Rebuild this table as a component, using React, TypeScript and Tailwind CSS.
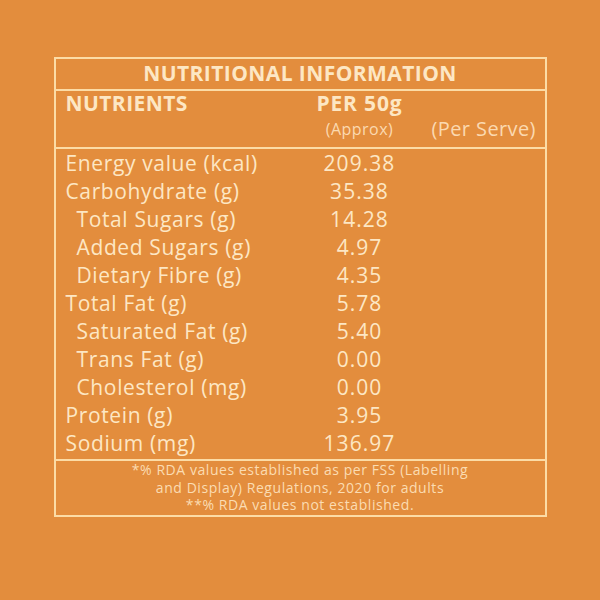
const rows: { name: string; value: string; indent?: boolean }[] = [
    { name: "Energy value (kcal)", value: "209.38" },
    { name: "Carbohydrate (g)", value: "35.38" },
    { name: "Total Sugars (g)", value: "14.28", indent: true },
    { name: "Added Sugars (g)", value: "4.97", indent: true },
    { name: "Dietary Fibre (g)", value: "4.35", indent: true },
    { name: "Total Fat (g)", value: "5.78" },
    { name: "Saturated Fat (g)", value: "5.40", indent: true },
    { name: "Trans Fat (g)", value: "0.00", indent: true },
    { name: "Cholesterol (mg)", value: "0.00", indent: true },
    { name: "Protein (g)", value: "3.95" },
    { name: "Sodium (mg)", value: "136.97" },
];

export default function App() {
    return (
        <div
            className="flex h-[600px] w-[600px] items-start justify-center bg-[#e38d3d] pt-[57px] text-[#fde7c4]"
            style={{ fontFamily: '"Open Sans", "Noto Sans", sans-serif' }}
        >
            <div className="w-[493px] border-2 border-[#fcdca6]">
                <div className="flex h-[32px] items-center justify-center border-b-2 border-[#fcdca6] text-[21px] font-bold tracking-[0.02em]">
                    NUTRITIONAL INFORMATION
                </div>

                <div className="grid h-[58px] grid-cols-[252px_104px_1fr] grid-rows-[24px_1fr] border-b-2 border-[#fcdca6]">
                    <div className="pl-[10px] text-[21px] font-bold leading-[24px] tracking-[0.02em]">
                        NUTRIENTS
                    </div>
                    <div className="whitespace-nowrap text-center text-[21px] font-bold leading-[24px] tracking-[0.04em]">
                        PER 50g
                    </div>
                    <div />
                    <div />
                    <div className="pt-[4px] text-center text-[16px] leading-[20px] tracking-[0.03em] text-[#fbd9b0]">
                        (Approx)
                    </div>
                    <div className="pl-[20px] pt-[3px] text-[20px] leading-[22px] tracking-[0.02em] text-[#fbd9b0]">
                        (Per Serve)
                    </div>
                </div>

                <div className="grid grid-cols-[252px_104px_1fr] pb-[2px]">
                    {rows.map((row) => (
                        <div key={row.name} className="contents">
                            <div
                                className={
                                    row.indent
                                        ? "whitespace-nowrap pl-[21px] text-[21px] leading-[28px] tracking-[0.03em]"
                                        : "whitespace-nowrap pl-[10px] text-[21px] leading-[28px] tracking-[0.03em]"
                                }
                            >
                                {row.name}
                            </div>
                            <div className="text-center text-[21px] leading-[28px] tracking-[0.05em]">
                                {row.value}
                            </div>
                            <div />
                        </div>
                    ))}
                </div>

                <div className="flex flex-col gap-[1px] border-t-2 border-[#fcdca6] pt-[1px] pb-[1px] text-center text-[14px] leading-[16.5px] tracking-[0.04em] text-[#fbdcb2]">
                    <p>*% RDA values established as per FSS (Labelling</p>
                    <p>and Display) Regulations, 2020 for adults</p>
                    <p>**% RDA values not established.</p>
                </div>
            </div>
        </div>
    );
}
